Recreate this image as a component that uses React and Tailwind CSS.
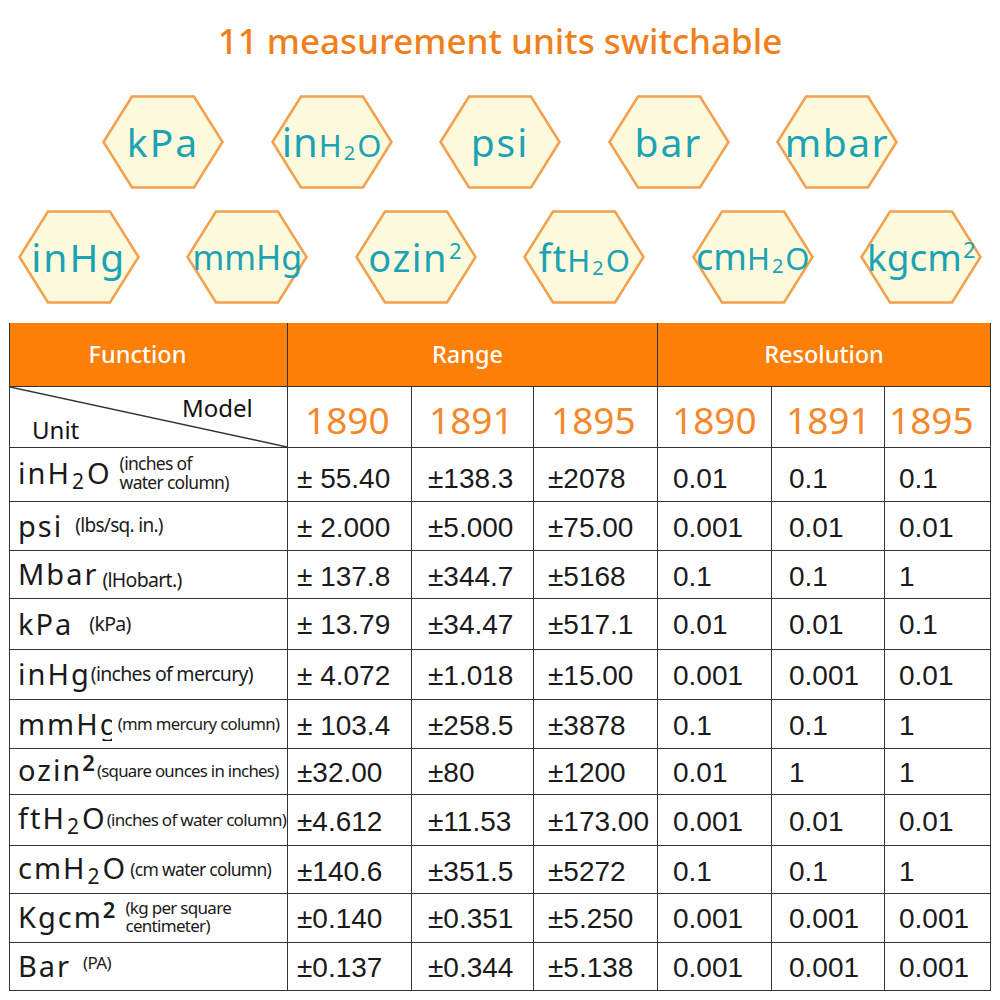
import React from 'react';

const TEAL = 'text-[#1ba3b4]';

const Hex = ({ children }) => (
  <div className="relative w-[122px] h-[94px] shrink-0">
    <svg className="absolute inset-0" width="122" height="94" viewBox="0 0 122 94">
      <polygon points="1.5,47 30,1.5 92,1.5 120.5,47 92,92.5 30,92.5" fill="#fdf9dd" stroke="#f2a04c" strokeWidth="2.5" />
    </svg>
    <div className={`absolute inset-0 flex items-center justify-center ${TEAL} font-['Noto_Sans',sans-serif] whitespace-nowrap`}>
      {children}
    </div>
  </div>
);

const H2O = ({ big = 'text-[31px]', small = 'text-[20px]' }) => (
  <>
    <span className={big}>H</span>
    <span className={`${small} relative top-[3px] mx-[2px]`}>2</span>
    <span className={big}>O</span>
  </>
);

const Sup = () => <span className="inline-block text-[22px] relative -top-[13px] ml-[1px]">2</span>;

const hexRow1 = [
  <span className="text-[39px] tracking-[2px]">kPa</span>,
  <span className="flex items-baseline"><span className="text-[40px] tracking-[1px]">in</span><H2O /></span>,
  <span className="text-[39px] tracking-[2px]">psi</span>,
  <span className="text-[39px] tracking-[2px]">bar</span>,
  <span className="text-[39px] tracking-[1.5px]">mbar</span>,
];

const hexRow2 = [
  <span className="text-[39px] tracking-[2px]">inHg</span>,
  <span className="text-[34px]">mmHg</span>,
  <span className="text-[38px] tracking-[1.5px]">ozin<Sup /></span>,
  <span className="flex items-baseline"><span className="text-[38px] tracking-[1px]">ft</span><H2O /></span>,
  <span className="flex items-baseline"><span className="text-[36px]">cm</span><H2O /></span>,
  <span className="text-[37px]">kgcm<Sup /></span>,
];

const SubH2O = () => (
  <>
    H<span className="text-[21px] relative top-[5px] mx-[1px]">2</span>O
  </>
);

const rows = [
  {
    unit: <>in<SubH2O /></>,
    desc: <span className="text-[17.5px] leading-[19px] ml-[8px] -mt-[2px]">(inches of<br />water column)</span>,
    h: 'h-[54px]',
    pt: 'pt-[10px]',
    vals: ['± 55.40', '±138.3', '±2078', '0.01', '0.1', '0.1'],
  },
  {
    unit: <>psi</>,
    desc: <span className="ml-[12px] text-[19px]">(lbs/sq. in.)</span>,
    h: 'h-[49px]',
    pt: 'pt-[4px]',
    vals: ['± 2.000', '±5.000', '±75.00', '0.001', '0.01', '0.01'],
  },
  {
    unit: <>Mbar</>,
    desc: <span className="ml-[4px] text-[19.5px] relative top-[6px]">(lHobart.)</span>,
    h: 'h-[48px]',
    pt: 'pt-[6px]',
    vals: ['± 137.8', '±344.7', '±5168', '0.1', '0.1', '1'],
  },
  {
    unit: <>kPa</>,
    desc: <span className="ml-[16px] text-[19.5px]">(kPa)</span>,
    h: 'h-[51px]',
    pt: 'pt-[3px]',
    vals: ['± 13.79', '±34.47', '±517.1', '0.01', '0.01', '0.1'],
  },
  {
    unit: <>inHg</>,
    desc: <span className="ml-[0px] text-[19.5px]">(inches of mercury)</span>,
    h: 'h-[50px]',
    pt: 'pt-[4px]',
    vals: ['± 4.072', '±1.018', '±15.00', '0.001', '0.001', '0.01'],
  },
  {
    unit: <>mmH<span className="inline-block w-[12px] overflow-hidden align-bottom">g</span></>,
    desc: <span className="ml-[6px] text-[16.8px]">(mm mercury column)</span>,
    h: 'h-[49px]',
    pt: 'pt-[4px]',
    vals: ['± 103.4', '±258.5', '±3878', '0.1', '0.1', '1'],
  },
  {
    unit: <>ozin<span className="text-[22px] font-semibold relative -top-[10px]">2</span></>,
    desc: <span className="ml-[0px] text-[16.8px]">(square ounces in inches)</span>,
    h: 'h-[46px]',
    pt: 'pt-[4px]',
    vals: ['±32.00', '±80', '±1200', '0.01', '1', '1'],
  },
  {
    unit: <>ft<SubH2O /></>,
    desc: <span className="ml-[0px] text-[17px]">(inches of water column)</span>,
    h: 'h-[51px]',
    pt: 'pt-[4px]',
    vals: ['±4.612', '±11.53', '±173.00', '0.001', '0.01', '0.01'],
  },
  {
    unit: <>cm<SubH2O /></>,
    desc: <span className="ml-[3px] text-[17.5px]">(cm water column)</span>,
    h: 'h-[48px]',
    pt: 'pt-[5px]',
    vals: ['±140.6', '±351.5', '±5272', '0.1', '0.1', '1'],
  },
  {
    unit: <>Kgcm<span className="text-[22px] font-semibold relative -top-[10px]">2</span></>,
    desc: <span className="leading-[17.5px] ml-[8px] -mt-[2px] text-[17px]">(kg per square<br />centimeter)</span>,
    h: 'h-[49px]',
    pt: 'pt-[3px]',
    vals: ['±0.140', '±0.351', '±5.250', '0.001', '0.001', '0.001'],
  },
  {
    unit: <>Bar</>,
    desc: <span className="ml-[12px] text-[17px] -mt-[6px]">(PA)</span>,
    h: 'h-[48px]',
    pt: 'pt-[3px]',
    vals: ['±0.137', '±0.344', '±5.138', '0.001', '0.001', '0.001'],
  },
];

const valPad = ['pl-[9px]', 'pl-[16px]', 'pl-[14px]', 'pl-[15px]', 'pl-[17px]', 'pl-[14px]'];

const B = 'border-[1.5px] border-[#333]';

export default function App() {
  return (
    <div className="w-[1000px] h-[1000px] bg-white overflow-hidden font-['Noto_Sans',sans-serif]">
      <h1 className="pt-[19px] text-center text-[35px] leading-[44px] font-medium text-[#f07f1d]">
        11 measurement units switchable
      </h1>

      <div className="mt-[32px] flex justify-center gap-[46.5px]">
        {hexRow1.map((c, i) => <Hex key={i}>{c}</Hex>)}
      </div>
      <div className="mt-[21px] flex justify-center gap-[46.5px]">
        {hexRow2.map((c, i) => <Hex key={i}>{c}</Hex>)}
      </div>

      <table className="mt-[19px] ml-[9px] border-collapse table-fixed w-[981px]">
        <colgroup>
          <col className="w-[278px]" />
          <col className="w-[124px]" />
          <col className="w-[122px]" />
          <col className="w-[124px]" />
          <col className="w-[114px]" />
          <col className="w-[113px]" />
          <col className="w-[106px]" />
        </colgroup>
        <thead>
          <tr className="h-[63px] bg-[#fd7f08] text-white text-[23.5px]">
            <th className={`${B} border-t-0 font-medium pr-[22px]`}>Function</th>
            <th colSpan={3} className={`${B} border-t-0 font-medium pr-[10px]`}>Range</th>
            <th colSpan={3} className={`${B} border-t-0 font-medium`}>Resolution</th>
          </tr>
          <tr className="h-[61px]">
            <th className={`${B} relative p-0 font-normal text-[#111]`}>
              <svg className="absolute inset-0" width="100%" height="100%" viewBox="0 0 278 63" preserveAspectRatio="none">
                <line x1="0" y1="0" x2="278" y2="63" stroke="#333" strokeWidth="1.5" />
              </svg>
              <span className="absolute left-[172px] top-[3px] text-[24px]">Model</span>
              <span className="absolute left-[22px] top-[25px] text-[24px]">Unit</span>
            </th>
            {['1890', '1891', '1895', '1890', '1891', '1895'].map((m, i) => (
              <th key={i} className={`${B} font-normal text-[37px] leading-[44px] text-[#f4882a] text-left ${i === 5 ? 'pl-[4px]' : i >= 3 ? 'pl-[14px]' : 'pl-[17px]'} pt-[6px]`}>
                {m}
              </th>
            ))}
          </tr>
        </thead>
        <tbody>
          {rows.map((r, i) => (
            <tr key={i} className={r.h}>
              <td className={`${B} pl-[8px] p-0`}>
                <div className="flex items-center whitespace-nowrap text-[#1a1a1a]">
                  <span className="text-[29px] tracking-[2px] leading-[34px]">{r.unit}</span>
                  <span className="tracking-[-0.7px] flex">{r.desc}</span>
                </div>
              </td>
              {r.vals.map((v, j) => (
                <td key={j} className={`${B} ${valPad[j]} ${r.pt} p-0 font-['Liberation_Sans',Arial,sans-serif] text-[28px] leading-[32px] text-[#1a1a1a] whitespace-nowrap`}>
                  {v}
                </td>
              ))}
            </tr>
          ))}
        </tbody>
      </table>
    </div>
  );
}
